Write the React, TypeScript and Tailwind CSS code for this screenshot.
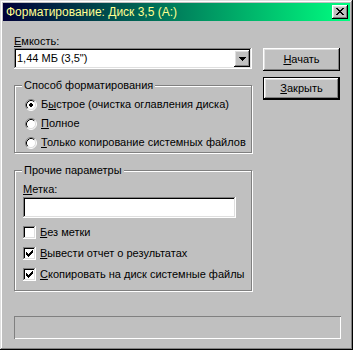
import React from "react";

const raised =
  "shadow-[inset_-1px_-1px_0_#000,inset_1px_1px_0_#fff,inset_-2px_-2px_0_#808080,inset_2px_2px_0_#dfdfdf]";
const field =
  "shadow-[inset_-1px_-1px_0_#fff,inset_1px_1px_0_#808080,inset_-2px_-2px_0_#dfdfdf,inset_2px_2px_0_#000]";
const groupBox =
  "border border-[#808080] shadow-[inset_1px_1px_0_#fff,1px_1px_0_#fff]";

function Radio({ checked }: { checked?: boolean }) {
  return (
    <svg width="12" height="12" viewBox="0 0 12 12" className="shrink-0">
      <circle cx="6" cy="6" r="5" fill="#fff" />
      <path d="M2.11 9.89 A5.5 5.5 0 0 1 9.89 2.11" fill="none" stroke="#808080" strokeWidth="1" />
      <path d="M9.89 2.11 A5.5 5.5 0 0 1 2.11 9.89" fill="none" stroke="#fff" strokeWidth="1" />
      <path d="M2.82 9.18 A4.5 4.5 0 0 1 9.18 2.82" fill="none" stroke="#000" strokeWidth="1" />
      <path d="M9.18 2.82 A4.5 4.5 0 0 1 2.82 9.18" fill="none" stroke="#dfdfdf" strokeWidth="1" />
      {checked && (
        <g fill="#000" shapeRendering="crispEdges">
          <rect x="5" y="4" width="2" height="4" />
          <rect x="4" y="5" width="4" height="2" />
        </g>
      )}
    </svg>
  );
}

function Check({ checked }: { checked?: boolean }) {
  return (
    <div className={`w-[13px] h-[13px] shrink-0 bg-white ${field}`}>
      {checked && (
        <svg width="13" height="13" viewBox="0 0 13 13" shapeRendering="crispEdges">
          <g fill="#000">
            <rect x="3" y="5" width="1" height="3" />
            <rect x="4" y="6" width="1" height="3" />
            <rect x="5" y="7" width="1" height="3" />
            <rect x="6" y="6" width="1" height="3" />
            <rect x="7" y="5" width="1" height="3" />
            <rect x="8" y="4" width="1" height="3" />
            <rect x="9" y="3" width="1" height="3" />
          </g>
        </svg>
      )}
    </div>
  );
}

export default function App() {
  return (
    <div
      className={`w-[353px] h-[350px] bg-[#c0c0c0] p-[3px] flex flex-col text-black text-[11px] leading-[13px] font-['Liberation_Sans',Arial,sans-serif] shadow-[inset_-1px_-1px_0_#000,inset_1px_1px_0_#dfdfdf,inset_-2px_-2px_0_#808080,inset_2px_2px_0_#fff]`}
    >
      {/* Title bar */}
      <div className="h-[18px] shrink-0 flex items-center justify-between pl-[3px] pr-[2px] bg-[linear-gradient(to_right,#000038,#00ff80)]">
        <span className="text-[12px] leading-[14px] text-[#ffff90]">
          Форматирование: Диск 3,5 (A:)
        </span>
        <div className={`w-[16px] h-[14px] bg-[#c0c0c0] flex items-center justify-center ${raised}`}>
          <svg width="8" height="7" viewBox="0 0 8 7" shapeRendering="crispEdges" className="-mt-[1px] -ml-[1px]">
            <g fill="#000">
              <rect x="0" y="0" width="2" height="1" />
              <rect x="6" y="0" width="2" height="1" />
              <rect x="1" y="1" width="2" height="1" />
              <rect x="5" y="1" width="2" height="1" />
              <rect x="2" y="2" width="4" height="1" />
              <rect x="3" y="3" width="2" height="1" />
              <rect x="2" y="4" width="4" height="1" />
              <rect x="1" y="5" width="2" height="1" />
              <rect x="5" y="5" width="2" height="1" />
              <rect x="0" y="6" width="2" height="1" />
              <rect x="6" y="6" width="2" height="1" />
            </g>
          </svg>
        </div>
      </div>

      {/* Body */}
      <div className="flex flex-col pl-[11px] pt-[14px]">
        <div className="flex">
          {/* Left column */}
          <div className="w-[238px] flex flex-col">
            <div className="h-[13px]">
              <u>Е</u>мкость:
            </div>
            <div className={`h-[21px] bg-white p-[2px] flex items-center ${field}`}>
              <span className="flex-1 pl-[1px]">1,44 МБ (3,5")</span>
              <div className={`w-[16px] h-[17px] bg-[#c0c0c0] flex items-center justify-center ${raised}`}>
                <svg width="7" height="4" viewBox="0 0 7 4" shapeRendering="crispEdges">
                  <g fill="#000">
                    <rect x="0" y="0" width="7" height="1" />
                    <rect x="1" y="1" width="5" height="1" />
                    <rect x="2" y="2" width="3" height="1" />
                    <rect x="3" y="3" width="1" height="1" />
                  </g>
                </svg>
              </div>
            </div>

            {/* Group 1 */}
            <div className={`mt-[16px] flex flex-col ${groupBox}`}>
              <span className="-mt-[7px] ml-[7px] px-[2px] self-start bg-[#c0c0c0] h-[13px]">
                Способ форматирования
              </span>
              <div className="mt-[3px] pl-[10px] flex flex-col">
                <div className="h-[19px] flex items-center">
                  <Radio checked />
                  <span className="ml-[4px]">
                    Б<u>ы</u>строе (очистка оглавления диска)
                  </span>
                </div>
                <div className="h-[19px] flex items-center">
                  <Radio />
                  <span className="ml-[4px]">
                    <u>П</u>олное
                  </span>
                </div>
                <div className="h-[19px] flex items-center">
                  <Radio />
                  <span className="ml-[4px]">
                    <u>Т</u>олько копирование системных файлов
                  </span>
                </div>
              </div>
            </div>

            {/* Group 2 */}
            <div className={`mt-[17px] flex flex-col pb-[5px] ${groupBox}`}>
              <span className="-mt-[7px] ml-[7px] px-[2px] self-start bg-[#c0c0c0] h-[13px]">
                Прочие параметры
              </span>
              <div className="pl-[8px] flex flex-col">
                <div className="mt-[6px] h-[13px]">
                  <u>М</u>етка:
                </div>
                <div className={`mt-[1px] w-[213px] h-[21px] bg-white ${field}`} />
                <div className="mt-[4px] flex flex-col">
                  <div className="h-[21px] flex items-center">
                    <Check />
                    <span className="ml-[4px]">
                      <u>Б</u>ез метки
                    </span>
                  </div>
                  <div className="h-[21px] flex items-center">
                    <Check checked />
                    <span className="ml-[4px]">
                      <u>В</u>ывести отчет о результатах
                    </span>
                  </div>
                  <div className="h-[21px] flex items-center">
                    <Check checked />
                    <span className="ml-[4px]">
                      <u>С</u>копировать на диск системные файлы
                    </span>
                  </div>
                </div>
              </div>
            </div>
          </div>

          {/* Right column */}
          <div className="ml-[11px] w-[77px] mt-[13px] flex flex-col gap-[6px]">
            <div className={`h-[23px] bg-[#c0c0c0] flex items-center justify-center ${raised}`}>
              <span>
                <u>Н</u>ачать
              </span>
            </div>
            <div className="h-[23px] bg-[#c0c0c0] flex items-center justify-center shadow-[inset_0_0_0_1px_#000,inset_-2px_-2px_0_#000,inset_2px_2px_0_#fff,inset_-3px_-3px_0_#808080,inset_3px_3px_0_#dfdfdf]">
              <span>
                <u>З</u>акрыть
              </span>
            </div>
          </div>
        </div>

        {/* Status bar */}
        <div className="mt-[25px] w-[327px] h-[23px] shadow-[inset_1px_1px_0_#808080,inset_-1px_-1px_0_#fff]" />
      </div>
    </div>
  );
}
